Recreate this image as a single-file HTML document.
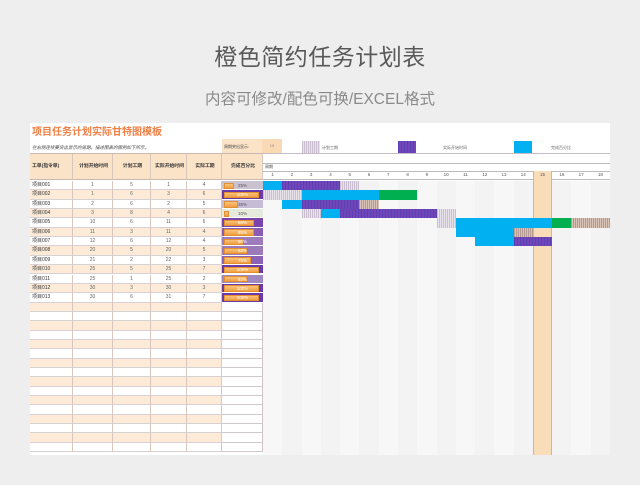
<!DOCTYPE html>
<html><head><meta charset="utf-8">
<style>
*{margin:0;padding:0;box-sizing:border-box}
body{width:640px;height:485px;background:#eeeeee;position:relative;overflow:hidden;font-family:"Liberation Sans","Noto Sans CJK SC",sans-serif}
.t{position:absolute;left:0;width:640px;text-align:center;white-space:nowrap}
.a{position:absolute}
.sheet{position:absolute;left:30px;top:123px;width:580px;height:332px;background:#fff}
.c{position:absolute;font-size:5px;color:#444;text-align:center;white-space:nowrap;overflow:hidden}
</style></head><body>
<div class="t" style="top:38px;font-size:23px;color:#595959;letter-spacing:0.5px">橙色简约任务计划表</div>
<div class="t" style="top:87px;font-size:15.5px;color:#8a8a8a">内容可修改/配色可换/EXCEL格式</div>
<div class="sheet"></div>
<div id="g"></div>
<script>
var g=document.getElementById('g'),h='';
function box(x,y,w,hh,st,txt){h+='<div class="a" style="left:'+x+'px;top:'+y+'px;width:'+w+'px;height:'+hh+'px;'+st+'">'+(txt||'')+'</div>';}
// title
h+='<div class="a" style="left:32px;top:123px;font-size:10px;font-weight:bold;color:#f07f45;white-space:nowrap">项目任务计划实际甘特图模板</div>';
h+='<div class="a" style="left:32px;top:145px;font-size:4.5px;font-style:italic;color:#444;white-space:nowrap">在右侧连续要突出显示的周期。描述图表的图例如下所示。</div>';
// legend
box(222,139,40,14,'background:#fbe3c8;font-size:4px;color:#444;padding:5px 2px');h+='';
g.innerHTML='';
h+='<div class="a" style="left:224px;top:144px;font-size:4px;color:#444">周期突出显示:</div>';
box(262,139,20,14,'background:#f9dab5;font-size:4px;color:#888;text-align:center;line-height:14px','15');
box(263,153,347,1,'background:#c8bcc8');
var pl='background:repeating-linear-gradient(90deg,#c9bfd0 0 1px,#e9e3ec 1px 2px),#ddd';
var pu='background:repeating-linear-gradient(90deg,#5b3fb5 0 1px,#7046b8 1px 3px)';
var br='background:repeating-linear-gradient(90deg,#b49a92 0 1px,#d8c3b6 1px 2px)';
box(302,141,18,12,pl);h+='<div class="a" style="left:322px;top:145px;font-size:4px;color:#666">计划工期</div>';
box(398,141,18,12,pu);h+='<div class="a" style="left:443px;top:145px;font-size:4px;color:#666">实际开始时间</div>';
box(514,141,18,12,'background:#00b0f0');h+='<div class="a" style="left:551px;top:145px;font-size:4px;color:#666">完成百分比</div>';
// table columns
var cx=[30,73,113,151,187,222,263];
var heads=['工单(指令单)','计划开始时间','计划工期','实际开始时间','实际工期','完成百分比'];
var top0=153,hh=27,ry=181,rh=9.35,N=29;
for(var i=0;i<6;i++){box(cx[i],top0,cx[i+1]-cx[i],hh,'background:#fbe3c8;border-right:1px solid #d9c7bd;border-top:1px solid #c9b7b0;border-bottom:1px solid #c9b7b0;font-size:4.8px;font-weight:bold;color:#333;text-align:'+(i?'center':'left')+';line-height:26px;padding-left:2px',heads[i]);}
var data=[[1,5,1,4,25],[1,6,3,6,100],[2,6,2,5,35],[3,8,4,6,10],[10,6,11,6,85],[11,3,11,4,85],[12,6,12,4,50],[20,5,20,5,62],[21,2,22,3,75],[25,5,25,7,100],[25,1,25,2,62],[30,3,30,3,100],[30,6,31,7,100]];
var fbg=['#c8c2d0','#6a3aa6','#c6bcd6','#e5eadc','#7a44aa','#8a5cb4','#9d7cbc','#9a7ab8','#8b62b6','#6a3aa6','#a088c0','#6a3aa6','#6a3aa6'];
for(var r=0;r<N;r++){var y=ry+r*rh;var bg=r%2?'#fdebd8':'#fff';
 for(var i=0;i<5;i++){var txt='';if(r<13){txt=i==0?('项目0'+(r+1<10?'0':'')+(r+1)):data[r][i-1];}
  h+='<div class="c" style="left:'+cx[i]+'px;top:'+y+'px;width:'+(cx[i+1]-cx[i])+'px;height:'+rh+'px;line-height:'+rh+'px;background:'+bg+';border-right:1px solid #d9c7bd;border-bottom:1px solid #d8d0d4;'+(i==0?'text-align:left;padding-left:2px;font-size:5px;color:#333':'color:#666')+'">'+txt+'</div>';}
 if(r<13){var p=data[r][4];box(222,y,41,rh,'background:'+fbg[r]+';border-bottom:1px solid #fff');box(224,y+1.5,37*p/100*0.9+2,rh-3,'background:linear-gradient(#f9c27d,#f0a040);border:0.5px solid #e59030');h+='<div class="c" style="left:222px;top:'+y+'px;width:41px;line-height:'+rh+'px;font-size:4.5px;color:'+(p>=50?'#fff':'#555')+'">'+p+'%</div>';}
 else box(222,y,41,rh,'background:#fff;border-right:1px solid #d0c0c8;border-bottom:1px solid #d0c8cc');
}
// gantt
var gx=263,cw=19.28;
box(gx,163,347,17,'background:#fff;border-top:1px solid #bbb;border-bottom:1px solid #bbb');
h+='<div class="a" style="left:265px;top:164px;font-size:4px;color:#444">周期</div>';
box(gx,171,347,1,'background:#bbb');
for(var d=0;d<18;d++){var x=gx+d*cw;
 box(x,181,cw,274,'background:'+(d%2?'#f3f3f3':'#f7f7f7'));
 if(d==14)box(x,171,cw,284,'background:#f8ddb8;border-left:1px solid #eeb070;border-right:1px solid #eeb070');
 h+='<div class="c" style="left:'+x+'px;top:172px;width:'+cw+'px;font-size:4.5px;color:#555">'+(d+1)+'</div>';}
var bars=[[0,1,1,'b'],[0,2,4,'p'],[0,5,5,'g'],[1,1,2,'g'],[1,3,6,'b'],[1,7,8,'n'],[2,2,2,'b'],[2,3,5,'p'],[2,6,6,'r'],[3,3,3,'g'],[3,4,4,'b'],[3,5,9,'p'],[3,10,10,'g'],[4,10,10,'g'],[4,11,15,'b'],[4,16,16,'n'],[4,17,18,'r'],[5,11,13,'b'],[5,14,14,'r'],[6,12,13,'b'],[6,14,15,'p']];
var st={b:'background:#00b0f0',p:pu,g:pl,n:'background:#00b050',r:br};
bars.forEach(function(b){box(gx+(b[1]-1)*cw,ry+b[0]*rh,(b[2]-b[1]+1)*cw,rh,st[b[3]]);});
g.innerHTML=h;
</script>
</body></html>
